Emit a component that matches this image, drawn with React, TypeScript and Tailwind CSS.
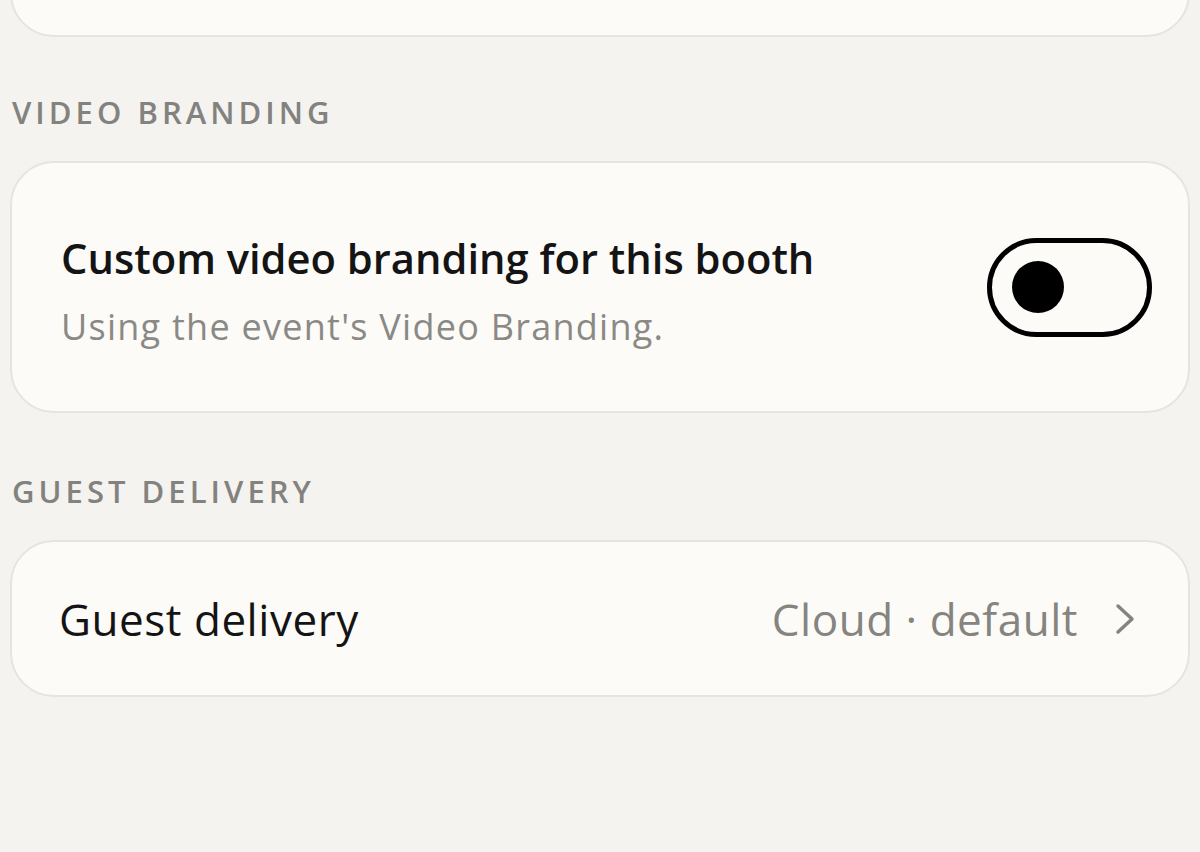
import React, { useState } from "react";

function SectionLabel({ children }: { children: React.ReactNode }) {
  return (
    <div className="px-[2px] text-[31px] font-semibold tracking-[0.13em] text-[#83827e] leading-none">
      {children}
    </div>
  );
}

export default function App() {
  const [enabled, setEnabled] = useState(false);

  return (
    <div
      className="w-[1200px] h-[852px] overflow-hidden bg-[#f4f3f0] px-[10px]"
      style={{ fontFamily: "'Open Sans', 'Noto Sans', sans-serif" }}
    >
      {/* Previous card, cut off at top */}
      <div className="-mt-[100px] h-[137px] rounded-[44px] border-2 border-[#e6e4de] bg-[#fcfbf7]" />

      <div className="mt-[60px]">
        <SectionLabel>VIDEO BRANDING</SectionLabel>
      </div>

      <div className="mt-[33px] h-[252px] rounded-[44px] border-2 border-[#e6e4de] bg-[#fcfbf7] flex items-center justify-between pl-[49px] pr-[36px]">
        <div className="flex flex-col pt-[8px]">
          <div className="text-[41.7px] font-semibold text-[#141414] leading-none">
            Custom video branding for this booth
          </div>
          <div className="mt-[30px] text-[36px] tracking-[0.035em] text-[#8a8985] leading-none">
            Using the event's Video Branding.
          </div>
        </div>
        <button
          onClick={() => setEnabled(!enabled)}
          className={`w-[165px] h-[99px] rounded-full border-[5px] border-black flex items-center px-[20px] ${
            enabled ? "justify-end bg-black" : "justify-start bg-[#fcfbf7]"
          }`}
        >
          <span
            className={`block w-[52px] h-[52px] rounded-full ${
              enabled ? "bg-white" : "bg-black"
            }`}
          />
        </button>
      </div>

      <div className="mt-[63px]">
        <SectionLabel>GUEST DELIVERY</SectionLabel>
      </div>

      <div className="mt-[33px] h-[157px] rounded-[44px] border-2 border-[#e6e4de] bg-[#fcfbf7] flex items-center justify-between pl-[47px] pr-[52px]">
        <div className="text-[44px] tracking-[0.012em] text-[#141414] leading-none">
          Guest delivery
        </div>
        <div className="flex items-center gap-[36px]">
          <span className="text-[44px] tracking-[0.012em] text-[#85847f] leading-none">
            Cloud · default
          </span>
          <svg
            width="22"
            height="32"
            viewBox="0 0 22 32"
            fill="none"
            stroke="#85847f"
            strokeWidth={3.5}
            strokeLinecap="round"
            strokeLinejoin="round"
          >
            <path d="M4 3l14 13L4 29" />
          </svg>
        </div>
      </div>
    </div>
  );
}
